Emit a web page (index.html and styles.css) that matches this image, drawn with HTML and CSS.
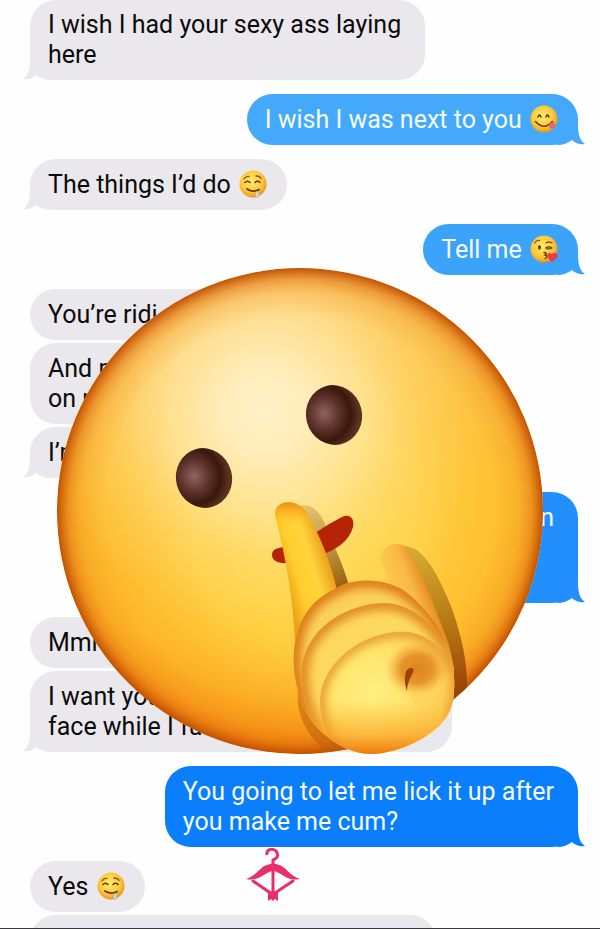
FILE: index.html
```
<!DOCTYPE html>
<html lang="en">
<head>
    <meta charset="UTF-8">
    <meta name="viewport" content="width=device-width, initial-scale=1.0">
    <title>Messages</title>
    <link rel="stylesheet" href="styles.css">
</head>
<body>
<svg class="defs" aria-hidden="true">
    <defs>
        <radialGradient id="smallFace" cx="0.45" cy="0.4" r="0.6">
            <stop offset="0" stop-color="#ffec6a"/>
            <stop offset="0.65" stop-color="#fdc93c"/>
            <stop offset="1" stop-color="#e8941e"/>
        </radialGradient>
    </defs>
    <symbol id="tail" viewBox="0 4 28 26">
        <path d="M7 4V8C7 18 6 25 0 29C5 30 10 28 13 25C17 28 22 30 28 30V4Z"/>
    </symbol>
    <symbol id="yum" viewBox="0 0 28 28">
        <circle cx="14" cy="14" r="13.5" fill="url(#smallFace)"/>
        <path d="M8 12q1.500-4 3 0M16 12q1.500-4 3 0" fill="none" stroke="#5b3410" stroke-width="1.500" stroke-linecap="round"/>
        <path d="M5.500 16.500Q14 26 22.500 16.500" fill="none" stroke="#7a3c0c" stroke-width="1.600" stroke-linecap="round"/>
        <path d="M19 20C20 17 24 17 25 19C26 23 22 25 20 23Z" fill="#f0607c"/>
    </symbol>
    <symbol id="drool" viewBox="0 0 28 28">
        <circle cx="14" cy="14" r="13.5" fill="url(#smallFace)"/>
        <path d="M5 9q2-3 5-2.500M17 6q4 0 5 2.500" fill="none" stroke="#8a5214" stroke-width="1.300" stroke-linecap="round"/>
        <path d="M6 12.500q2.500-2.500 5 0M16 12.500q2.500-2.500 5 0" fill="none" stroke="#5b3410" stroke-width="1.500" stroke-linecap="round"/>
        <path d="M8 19Q14 23 20 19.500" fill="none" stroke="#6b370e" stroke-width="1.800" stroke-linecap="round"/>
        <path d="M17 21.500H20V25C20 28 16 28 16 25.500Z" fill="#d3d8c9" stroke="#8d9a86" stroke-width="0.500"/>
    </symbol>
    <symbol id="kiss" viewBox="0 0 28 28">
        <circle cx="14" cy="14" r="13.5" fill="url(#smallFace)"/>
        <path d="M4.500 8q2-3 5-2.500M16 8q3-2 6 0" fill="none" stroke="#8a5214" stroke-width="1.300" stroke-linecap="round"/>
        <ellipse cx="9.500" cy="12.500" rx="1.400" ry="2.200" fill="#5b3410"/>
        <path d="M16 12.500q3-1.500 6 .500M16 13.500q3 1 5 0" fill="none" stroke="#5b3410" stroke-width="1.200" stroke-linecap="round"/>
        <path d="M14 17.500q4 .500 1 2.500q4 1 0 3.500" fill="none" stroke="#6b370e" stroke-width="1.400" stroke-linecap="round"/>
        <path d="M22 27C16 23 16 18 19.500 18C21 18 22 19.500 22 19.500C23 17 27.500 17 27.500 20.500C27.500 24 24 25.500 22 27Z" fill="#ea3b46"/>
    </symbol>
</svg>

<main class="chat">
    <div class="message received">
        <p>I wish I had your sexy ass laying<br>here</p>
        <svg class="tail"><use href="#tail"/></svg>
    </div>
    <div class="message sent first">
        <p>I wish I was next to you <svg class="emoji" role="img" aria-label="Yum"><use href="#yum"/></svg></p>
        <svg class="tail"><use href="#tail"/></svg>
    </div>
    <div class="message received">
        <p>The things I’d do <svg class="emoji" role="img" aria-label="Drooling"><use href="#drool"/></svg></p>
        <svg class="tail"><use href="#tail"/></svg>
    </div>
    <div class="message sent second">
        <p>Tell me <svg class="emoji" role="img" aria-label="Kiss"><use href="#kiss"/></svg></p>
        <svg class="tail"><use href="#tail"/></svg>
    </div>
    <div class="message received grouped partial">
        <p>You’re ridi</p>
    </div>
    <div class="message received grouped">
        <p>And m<br>on m</p>
    </div>
    <div class="message received">
        <p>I’m</p>
        <svg class="tail"><use href="#tail"/></svg>
    </div>
    <div class="message sent third">
        <p>n<br>&nbsp;<br>&nbsp;</p>
        <svg class="tail"><use href="#tail"/></svg>
    </div>
    <div class="message received grouped">
        <p>Mmm</p>
    </div>
    <div class="message received wide">
        <p>I want you<br>face while I fu</p>
        <svg class="tail"><use href="#tail"/></svg>
    </div>
    <div class="message sent fourth">
        <p>You going to let me lick it up after<br>you make me cum?</p>
        <svg class="tail"><use href="#tail"/></svg>
    </div>
    <div class="message received grouped">
        <p>Yes <svg class="emoji" role="img" aria-label="Drooling"><use href="#drool"/></svg></p>
    </div>
    <div class="message received long">
        <p>&nbsp;</p>
    </div>

    <svg class="sticker" viewBox="56 267 488 489" role="img" aria-label="Shushing face">
        <defs>
            <linearGradient id="base" x1="0" y1="0" x2="0" y2="1">
                <stop offset="0" stop-color="#fbc35c"/>
                <stop offset="0.45" stop-color="#fdbd30"/>
                <stop offset="0.75" stop-color="#fdb026"/>
                <stop offset="1" stop-color="#f6840c"/>
            </linearGradient>
            <radialGradient id="yellow" gradientUnits="userSpaceOnUse" cx="310" cy="530" r="230">
                <stop offset="0" stop-color="#ffdf58"/>
                <stop offset="0.5" stop-color="#ffd446" stop-opacity="0.85"/>
                <stop offset="1" stop-color="#ffc834" stop-opacity="0"/>
            </radialGradient>
            <radialGradient id="shine" gradientUnits="userSpaceOnUse" cx="265" cy="410" r="220">
                <stop offset="0" stop-color="#fff0c6"/>
                <stop offset="0.2" stop-color="#ffeebf" stop-opacity="0.95"/>
                <stop offset="0.45" stop-color="#ffe8a6" stop-opacity="0.75"/>
                <stop offset="0.7" stop-color="#ffdd84" stop-opacity="0.4"/>
                <stop offset="1" stop-color="#ffd870" stop-opacity="0"/>
            </radialGradient>
            <radialGradient id="rim">
                <stop offset="0.8" stop-color="#ee8a10" stop-opacity="0"/>
                <stop offset="0.9" stop-color="#ea8214" stop-opacity="0.22"/>
                <stop offset="0.95" stop-color="#de6c0c" stop-opacity="0.5"/>
                <stop offset="1" stop-color="#bd4b02" stop-opacity="0.95"/>
            </radialGradient>
            <radialGradient id="eye" cx="0.34" cy="0.43" r="0.62">
                <stop offset="0" stop-color="#936260"/>
                <stop offset="0.4" stop-color="#603630"/>
                <stop offset="0.75" stop-color="#3a170b"/>
                <stop offset="1" stop-color="#5a3320"/>
            </radialGradient>
            <linearGradient id="finger" gradientUnits="userSpaceOnUse" x1="281" y1="575" x2="330" y2="560">
                <stop offset="0" stop-color="#eea018"/>
                <stop offset="0.3" stop-color="#ffce2d"/>
                <stop offset="0.65" stop-color="#ffd43c"/>
                <stop offset="1" stop-color="#e79a18"/>
            </linearGradient>
            <linearGradient id="fingertip" gradientUnits="userSpaceOnUse" x1="289" y1="503" x2="289" y2="524">
                <stop offset="0" stop-color="#ef9012"/>
                <stop offset="1" stop-color="#ffb81e" stop-opacity="0"/>
            </linearGradient>
            <linearGradient id="shadow" gradientUnits="userSpaceOnUse" x1="400" y1="545" x2="420" y2="700">
                <stop offset="0" stop-color="#c99c2c" stop-opacity="0.7"/>
                <stop offset="0.5" stop-color="#aa7010" stop-opacity="0.85"/>
                <stop offset="1" stop-color="#994106"/>
            </linearGradient>
            <linearGradient id="fingerShadow" gradientUnits="userSpaceOnUse" x1="305" y1="505" x2="340" y2="590">
                <stop offset="0" stop-color="#ac8c48" stop-opacity="0.35"/>
                <stop offset="1" stop-color="#925608" stop-opacity="0.95"/>
            </linearGradient>
            <linearGradient id="thumb" gradientUnits="userSpaceOnUse" x1="382" y1="610" x2="430" y2="592">
                <stop offset="0" stop-color="#fdc33a" stop-opacity="0"/>
                <stop offset="0.4" stop-color="#fcc54c"/>
                <stop offset="0.7" stop-color="#f9b844"/>
                <stop offset="1" stop-color="#e68b22"/>
            </linearGradient>
            <radialGradient id="fold3Fill" gradientUnits="userSpaceOnUse" cx="370" cy="690" r="80">
                <stop offset="0" stop-color="#ffef82"/>
                <stop offset="0.5" stop-color="#ffe46c"/>
                <stop offset="1" stop-color="#fccb50"/>
            </radialGradient>
            <radialGradient id="curl">
                <stop offset="0" stop-color="#de8420"/>
                <stop offset="0.5" stop-color="#e38c22" stop-opacity="0.9"/>
                <stop offset="1" stop-color="#f2ac3c" stop-opacity="0"/>
            </radialGradient>
            <linearGradient id="palm" x1="0" y1="0" x2="0" y2="1">
                <stop offset="0" stop-color="#fdb030" stop-opacity="0"/>
                <stop offset="0.6" stop-color="#f9a024" stop-opacity="0.6"/>
                <stop offset="1" stop-color="#ec7208"/>
            </linearGradient>
            <filter id="soft" x="-20%" y="-20%" width="140%" height="140%">
                <feGaussianBlur stdDeviation="5"/>
            </filter>
            <path id="handShape" d="M337 588C350 579 384 576 406 592C424 606 446 630 453 664C456 692 453 705 448 714C438 735 398 754 371 754C337 754 300 718 298 691C288 655 293 606 337 588Z"/>
            <path id="fold2" d="M302 680C298 630 348 602 387 603C420 606 442 632 466 680L475 770H345C318 738 303 712 302 680Z"/>
            <path id="fold3" d="M320 702C320 662 365 629 408 632C432 635 448 652 475 700V780H355C332 748 320 724 320 702Z"/>
            <clipPath id="faceClip"><circle cx="300" cy="511" r="243"/></clipPath>
            <clipPath id="handClip"><use href="#handShape"/></clipPath>
            <clipPath id="fold2Clip"><use href="#fold2"/></clipPath>
            <clipPath id="fold3Clip"><use href="#fold3"/></clipPath>
        </defs>
        <circle cx="300" cy="511" r="243" fill="url(#base)"/>
        <g clip-path="url(#faceClip)">
            <circle cx="310" cy="530" r="230" fill="url(#yellow)"/>
            <circle cx="265" cy="410" r="220" fill="url(#shine)"/>
            <circle cx="300" cy="511" r="243" fill="url(#rim)"/>
            <path d="M403 546C425 545 440 580 451 606C461 634 468 662 467 690L450 706L430 620Z" fill="url(#shadow)"/>
            <path d="M298 690C295 716 310 740 330 755H355L320 715Z" fill="#b95e0b" opacity="0.55"/>
        </g>
        <ellipse cx="204" cy="478" rx="28" ry="30" transform="rotate(-15 204 478)" fill="url(#eye)"/>
        <ellipse cx="334" cy="415" rx="28" ry="30" transform="rotate(-15 334 415)" fill="url(#eye)"/>
        <path d="M297 507C313 500 323 516 328 532C337 552 345 570 349 586L337 591Z" fill="url(#fingerShadow)"/>
        <path d="M272 555C272 548 279 548 284 547C305 542 325 525 342 517C350 513 355 519 353 527C348 545 330 552 318 556C305 561 290 564 282 563C275 562 272 559 272 555Z" fill="#b52505"/>
        <path d="M275 515C274 499 298 498 307 513C318 532 331 561 337 590L340 620L295 645C294 600 285 555 275 515Z" fill="url(#finger)"/>
        <path d="M275 515C274 499 298 498 307 513L312 524H278Z" fill="url(#fingertip)"/>
        <path d="M381 558C381 545 399 539 407 549C421 569 437 612 449 645C458 680 453 700 448 714L390 690L395 600Z" fill="url(#thumb)"/>
        <g clip-path="url(#handClip)">
            <use href="#handShape" fill="#fbd05c"/>
            <path d="M448 714C456 692 453 664 446 640C432 612 418 600 406 592C384 576 350 579 337 588C293 606 288 655 298 691C300 718 337 754 371 754" fill="none" stroke="#dd7c18" stroke-width="15" filter="url(#soft)"/>
            <g clip-path="url(#fold2Clip)">
                <use href="#fold2" fill="#fed95f"/>
                <use href="#fold2" fill="none" stroke="#df8a20" stroke-width="14" filter="url(#soft)"/>
                <g clip-path="url(#fold3Clip)">
                    <use href="#fold3" fill="url(#fold3Fill)"/>
                    <use href="#fold3" fill="none" stroke="#e5982c" stroke-width="10" filter="url(#soft)"/>
                </g>
            </g>
            <path d="M446 625C456 655 464 690 450 722" fill="none" stroke="#ef9b30" stroke-width="12" filter="url(#soft)"/>
            <ellipse cx="417" cy="669" rx="32" ry="28" fill="url(#curl)"/>
            <path d="M407 692C419 696 433 692 439 679C446 690 430 711 414 704Z" fill="#fdd263" opacity="0.6"/>
            <rect x="290" y="700" width="170" height="56" fill="url(#palm)"/>
        </g>
        <path d="M407 691C403 678 405 667 412 668C417 671 408 676 407 691Z" fill="#9a4207"/>
    </svg>

    <svg class="bow" viewBox="0 0 54 54" role="img" aria-label="Bow hanger">
        <g fill="none" stroke="#ea2e6b" stroke-width="3">
            <path d="M21 7C20 1 26 0 30 3C34 8 30 11 27 12V18"/>
            <path d="M27 22V46M7 33L23 44M47 33L32 43" stroke-linecap="round"/>
        </g>
        <path d="M0 31C9 29 15 18 21 17Q27 14 33 17C39 18 45 29 54 31C40 34 36 24 27 23C18 24 14 34 0 31Z" fill="#ea2e6b"/>
        <path d="M22 42L27 44L32 42V53L29 51L27 53L25 51L22 53Z" fill="#ea2e6b"/>
    </svg>
</main>
</body>
</html>
```
FILE: styles.css
```
* {
    box-sizing: border-box;
    margin: 0;
    padding: 0;
}

body {
    height: 100vh;
    overflow: hidden;
    font-family: Roboto, 'Liberation Sans', sans-serif;
    background-color: #fefefe;
    color: #0b0b0c;
    border-bottom: 1px solid #38383a;
}

.defs {
    position: absolute;
    width: 0;
    height: 0;
}

.chat {
    position: relative;
    display: flex;
    flex-direction: column;
    align-items: flex-start;
    height: 100%;
    padding: 0 22px 0 30px;
    overflow: hidden;
}

.message {
    position: relative;
    flex-shrink: 0;
    padding: 11px 24px 10px 18px;
    margin-bottom: 14px;
    border-radius: 26px;
    font-size: 25px;
    line-height: 30px;
    white-space: nowrap;
}

.message:first-child {
    padding-top: 10px;
}

.message p {
    position: relative;
    z-index: 1;
}

.grouped {
    margin-bottom: 3px;
}

.received {
    min-width: 100px;
    background-color: #eae8ec;
    color: #0b0b0c;
    fill: #eae8ec;
}

.sent {
    align-self: flex-end;
    color: #f4fbff;
}

.first {
    background-color: #45a9fb;
    fill: #45a9fb;
}

.second {
    background-color: #3ba3fa;
    fill: #3ba3fa;
}

.third {
    width: 50%;
    background-color: #238ffc;
    fill: #238ffc;
    text-align: right;
}

.fourth {
    background-color: #0b7efc;
    fill: #0b7efc;
}

.partial {
    width: 40%;
}

.wide {
    width: 77%;
}

.long {
    width: 74%;
}

.tail {
    position: absolute;
    bottom: 0;
    left: -7px;
    width: 28px;
    height: 26px;
}

.sent .tail {
    left: auto;
    right: -7px;
    transform: scaleX(-1);
}

.emoji {
    width: 28px;
    height: 28px;
    margin: 0 -4px 0 2px;
    vertical-align: -5px;
}

.sticker {
    position: absolute;
    top: 267px;
    left: 0;
    right: 0;
    z-index: 2;
    width: 488px;
    margin: 0 auto;
}

.bow {
    position: absolute;
    top: 848px;
    left: 41%;
    z-index: 2;
    width: 54px;
    height: 54px;
}
```
